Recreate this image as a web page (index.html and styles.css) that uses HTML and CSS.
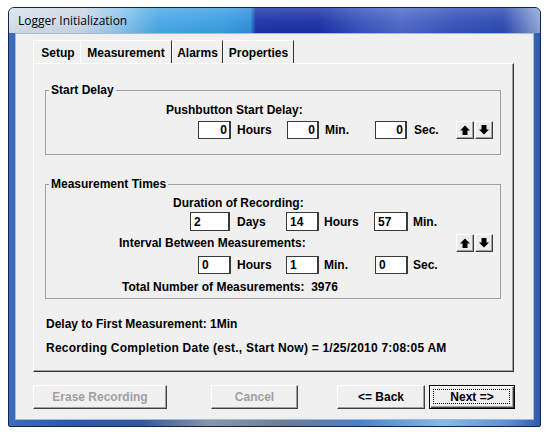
FILE: index.html
```html
<!DOCTYPE html>
<html>
<head>
<meta charset="utf-8">
<title>Logger Initialization</title>
<link rel="stylesheet" href="styles.css">
</head>
<body>
<div class="window">
  <div class="titlebar"><span class="title">Logger Initialization</span></div>
  <div class="client">
    <div class="tabs">
      <div class="tab t-setup">Setup</div>
      <div class="tab t-meas active">Measurement</div>
      <div class="tab t-alarms">Alarms</div>
      <div class="tab t-props">Properties</div>
    </div>
    <div class="panel">
      <fieldset class="group g-start">
        <legend>Start Delay</legend>
        <div class="caption c-push">Pushbutton Start Delay:</div>
        <div class="row r-start">
          <span></span>
          <span class="box right">0</span><span class="unit u6">Hours</span>
          <span class="box right">0</span><span class="unit u6">Min.</span>
          <span class="box right">0</span><span class="unit u7">Sec.</span>
          <div class="spin">
            <span class="sbtn"><svg viewBox="0 0 16 16" width="16" height="16"><polygon points="3,8.5 8,3.5 13,8.5 10.5,8.5 10.5,13 5.5,13 5.5,8.5" fill="#000"/></svg></span>
            <span class="sbtn"><svg viewBox="0 0 16 16" width="16" height="16"><polygon points="3,7.5 8,12.5 13,7.5 10.5,7.5 10.5,3 5.5,3 5.5,7.5" fill="#000"/></svg></span>
          </div>
        </div>
      </fieldset>
      <fieldset class="group g-meas">
        <legend>Measurement Times</legend>
        <div class="caption c-dur">Duration of Recording:</div>
        <div class="row r-dur">
          <span></span>
          <span class="box">2</span><span class="unit u7">Days</span>
          <span class="box">14</span><span class="unit u5">Hours</span>
          <span class="box">57</span><span class="unit u5">Min.</span>
        </div>
        <div class="row r-int">
          <span></span>
          <span class="caption">Interval Between Measurements:</span>
          <div class="spin">
            <span class="sbtn"><svg viewBox="0 0 16 16" width="16" height="16"><polygon points="3,8.5 8,3.5 13,8.5 10.5,8.5 10.5,13 5.5,13 5.5,8.5" fill="#000"/></svg></span>
            <span class="sbtn"><svg viewBox="0 0 16 16" width="16" height="16"><polygon points="3,7.5 8,12.5 13,7.5 10.5,7.5 10.5,3 5.5,3 5.5,7.5" fill="#000"/></svg></span>
          </div>
        </div>
        <div class="row r-int2">
          <span></span>
          <span class="box">0</span><span class="unit u6">Hours</span>
          <span class="box">1</span><span class="unit u5">Min.</span>
          <span class="box">0</span><span class="unit u5">Sec.</span>
        </div>
        <div class="caption c-total">Total Number of Measurements:  3976</div>
      </fieldset>
      <div class="info info1">Delay to First Measurement: 1Min</div>
      <div class="info info2">Recording Completion Date (est., Start Now) = 1/25/2010 7:08:05 AM</div>
    </div>
    <div class="buttons">
      <div class="btn b-erase disabled">Erase Recording</div>
      <div class="btn b-cancel disabled">Cancel</div>
      <div class="btn b-back">&lt;= Back</div>
      <div class="btn b-next default">Next =&gt;</div>
    </div>
  </div>
</div>
</body>
</html>
```
FILE: styles.css
```css
html, body {
  margin: 0;
  padding: 0;
  background: #ffffff;
}
body {
  font-family: "Liberation Sans", Arial, sans-serif;
  font-size: 12px;
  font-weight: bold;
  color: #000;
}

.window {
  margin: 7px 0 0 8px;
  width: 533px;
  height: 420px;
  box-sizing: border-box;
  border: 1px solid #18224a;
  border-radius: 6px 6px 2px 2px;
  overflow: hidden;
  display: flex;
  flex-direction: column;
  background: linear-gradient(90deg, #3c6cbc 0%, #2c58ac 12%, #34589c 25%, #8a96a8 38%, #6e7c94 52%, #4c80c8 66%, #86bce8 82%, #5c8ed0 94%, #2f5cae 100%);
}

.titlebar {
  height: 25px;
  flex: none;
  display: flex;
  align-items: center;
  padding-left: 9px;
  background:
    linear-gradient(180deg, rgba(255,255,255,0.18) 0%, rgba(255,255,255,0.05) 50%, rgba(0,0,0,0.04) 100%),
    linear-gradient(90deg, #d6e0ea 0%, #c8d7e6 14%, #8cc4ec 21%, #49a8e6 28%, #3a9ee2 40%, #2e8fda 45.5%, #1c32a6 46.5%, #1a2fa4 58%, #3552bc 66%, #4e68c8 74%, #3452b8 84%, #2a48b0 93%, #8fa6d6 100%);
  font-family: "Open Sans", "Liberation Sans", sans-serif;
  font-weight: normal;
  font-size: 12px;
  color: #000;
}

.client {
  flex: 1;
  margin: 0 6px 6px 6px;
  box-sizing: border-box;
  border: 1px solid #a6b9d2;
  background: #f0f0f0;
  padding: 6px 0 0 17px;
  display: flex;
  flex-direction: column;
}

.tabs {
  display: flex;
  height: 23px;
}
.tab {
  box-sizing: border-box;
  height: 23px;
  display: flex;
  align-items: center;
  justify-content: center;
  padding-top: 1px;
  border-top: 1px solid #ffffff;
  border-left: 1px solid #ffffff;
  border-right: 1px solid #303030;
}
.t-setup { width: 47px; border-right: none; padding-left: 2px; }
.t-meas { width: 92px; }
.t-alarms { width: 51px; }
.t-props { width: 71px; }

.panel {
  width: 481px;
  height: 309px;
  box-sizing: border-box;
  border-top: 1px solid #ffffff;
  border-left: 1px solid #ffffff;
  border-right: 1px solid #303030;
  border-bottom: 1px solid #303030;
  box-shadow: inset -1px -1px 0 #a0a0a0;
  padding: 0 12px 0 11px;
}

.group {
  margin: 0;
  padding: 0;
  min-width: 0;
  border: 1px solid #a0a0a0;
}
.group legend {
  padding: 0 2px;
  margin-left: 3px;
  line-height: 14px;
}
.g-start {
  margin-top: 19px;
  padding-bottom: 15px;
}
.g-meas {
  margin-top: 22px;
  padding-bottom: 4px;
}

.caption {
  line-height: 14px;
  white-space: pre;
}
.c-push { padding-left: 120px; margin-top: 6px; }
.c-dur { padding-left: 127px; margin-top: 5px; }
.c-total { padding-left: 76px; margin-top: 6px; }

.row {
  display: grid;
  align-items: center;
}
.r-start {
  grid-template-columns: 152px 33px 56px 32px 56px 32px 49px 37px;
  height: 18px;
  margin-top: 4px;
}
.r-dur {
  grid-template-columns: 144px 40px 56px 33px 55px 34px auto;
  height: 19px;
  margin-top: 2px;
}
.r-int {
  grid-template-columns: 73px 337px 37px;
  height: 18px;
  margin-top: 3px;
}
.r-int2 {
  grid-template-columns: 152px 33px 55px 33px 56px 33px auto;
  height: 18px;
  margin-top: 4px;
}

.box {
  box-sizing: border-box;
  height: 100%;
  background: #ffffff;
  border: 1px solid #3a3a3a;
  border-right-width: 2px;
  display: flex;
  align-items: center;
  padding-left: 3px;
  line-height: 14px;
}
.box.right {
  justify-content: flex-end;
  padding-left: 0;
  padding-right: 2px;
}
.unit { line-height: 14px; }
.u5 { padding-left: 5px; }
.u6 { padding-left: 6px; }
.u7 { padding-left: 7px; }

.spin {
  display: flex;
  gap: 1px;
  height: 18px;
}
.sbtn {
  box-sizing: border-box;
  width: 18px;
  height: 18px;
  background: #ececec;
  border-top: 1px solid #ffffff;
  border-left: 1px solid #ffffff;
  border-right: 1px solid #404040;
  border-bottom: 1px solid #404040;
  box-shadow: inset -1px -1px 0 #a0a0a0;
  display: flex;
  align-items: center;
  justify-content: center;
}
.sbtn svg { display: block; }

.info {
  line-height: 14px;
  padding-left: 1px;
}
.info1 { margin-top: 18px; }
.info2 { margin-top: 10px; letter-spacing: 0.22px; }

.buttons {
  display: flex;
  margin-top: 13px;
  height: 24px;
}
.btn {
  position: relative;
  box-sizing: border-box;
  height: 24px;
  background: #f0f0f0;
  border-top: 1px solid #ffffff;
  border-left: 1px solid #ffffff;
  border-right: 1px solid #404040;
  border-bottom: 1px solid #404040;
  box-shadow: inset -1px -1px 0 #a0a0a0;
  display: flex;
  align-items: center;
  justify-content: center;
}
.btn.disabled { color: #a0a0a0; }
.b-erase { width: 134px; }
.b-cancel { width: 87px; margin-left: 44px; }
.b-back { width: 88px; margin-left: 39px; }
.b-next { width: 86px; margin-left: 4px; }
.btn.default {
  border: 1px solid #000000;
  box-shadow: inset 1px 1px 0 #ffffff, inset -1px -1px 0 #404040, inset -2px -2px 0 #a0a0a0;
}
.btn.default::after {
  content: "";
  position: absolute;
  left: 3px;
  top: 3px;
  right: 4px;
  bottom: 4px;
  border: 1px dotted #000000;
}
```
